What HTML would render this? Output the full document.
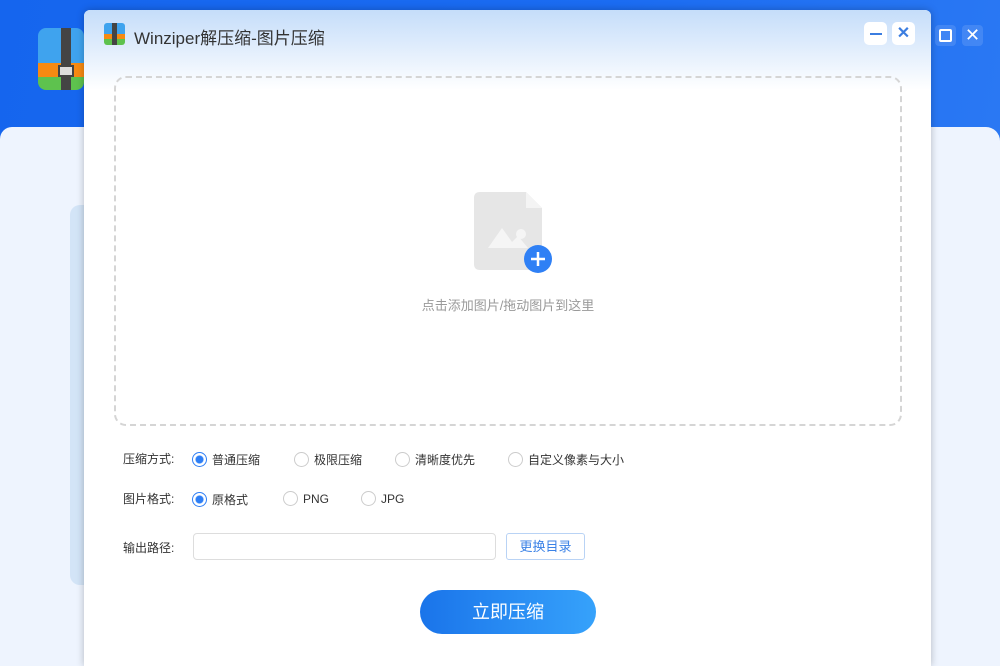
<!DOCTYPE html>
<html style="width:1000px;height:666px;overflow:hidden"><head><meta charset="utf-8"><style>
*{margin:0;padding:0;box-sizing:border-box}
body{width:1000px;height:666px;overflow:hidden;position:relative;background:#1a6cf0;font-family:"Liberation Sans","Noto Sans CJK SC",sans-serif}
.top{position:absolute;left:0;top:0;width:1000px;height:140px;background:linear-gradient(100deg,#1565ee,#1b6cf2 60%,#2a78f3)}
.panel{position:absolute;left:0;top:127px;width:1000px;height:539px;background:#eef4fe;border-radius:12px 14px 0 0}
.card{position:absolute;left:70px;top:205px;width:40px;height:380px;background:#d3e4f7;border-radius:10px}
.dlg{position:absolute;left:84px;top:10px;width:847px;height:656px;background:#fff;border-radius:6px 6px 0 0;box-shadow:0 0 8px rgba(0,0,0,.25);overflow:hidden}
.hdr{position:absolute;left:0;top:0;width:100%;height:80px;background:linear-gradient(#c5ddfa,#fff)}
.title{position:absolute;left:50px;top:14px;font-size:17px;color:#333}
.wb{position:absolute;top:12px;width:23px;height:23px;background:#fff;border-radius:5px}
.drop{position:absolute;left:30px;top:66px;width:788px;height:350px;border:2px dashed #d5d5d5;border-radius:12px}
.hint{position:absolute;left:0;width:100%;top:217px;text-align:center;font-size:13px;color:#999}
.lbl{position:absolute;left:39px;font-size:12px;color:#333}
.r{position:absolute;font-size:12px;color:#333;display:flex;align-items:center}
.r i{display:inline-block;width:15px;height:15px;border:1px solid #ccc;border-radius:50%;margin-right:5px;background:#fff}
.r i.on{border:1.5px solid #2d7ef5;background:radial-gradient(circle,#2d7ef5 3.5px,#fff 4.5px)}
.inp{position:absolute;left:109px;top:523px;width:303px;height:27px;border:1px solid #ddd;border-radius:4px}
.btn2{position:absolute;left:422px;top:523px;width:79px;height:27px;border:1px solid #b9d3f5;border-radius:3px;color:#3b82e6;font-size:13px;text-align:center;line-height:25px}
.go{position:absolute;left:336px;top:580px;width:176px;height:44px;border-radius:22px;background:linear-gradient(90deg,#1a74ea,#36a2fb);color:#fff;font-size:18px;text-align:center;line-height:44px}
</style></head><body>
<div class="top"></div>
<div class="panel"></div>
<div class="card"></div>
<div style="position:absolute;left:38px;top:28px;width:46px;height:62px;border-radius:8px;overflow:hidden">
<div style="height:35px;background:#3fa3ee"></div><div style="height:14px;background:#f78a12"></div><div style="height:13px;background:#5ec24e"></div>
<div style="position:absolute;left:23px;top:0;width:10px;height:62px;background:#444"></div>
<div style="position:absolute;left:20px;top:37px;width:16px;height:12px;background:#ddd;border:2px solid #444"></div></div>
<div style="position:absolute;left:935px;top:25px;width:21px;height:21px;background:rgba(255,255,255,.12);border-radius:4px"><div style="position:absolute;left:4px;top:4px;width:13px;height:13px;border:2px solid #fff;border-radius:2px"></div></div>
<div style="position:absolute;left:962px;top:25px;width:21px;height:21px;background:rgba(255,255,255,.12);border-radius:4px;color:#fff;font-size:18px;text-align:center;line-height:21px">✕</div>
<div class="dlg">
<div class="hdr"></div>
<div style="position:absolute;left:20px;top:13px;width:21px;height:22px;border-radius:3px;overflow:hidden"><div style="height:11px;background:#3fa3ee"></div><div style="height:5px;background:#f78a12"></div><div style="height:6px;background:#5ec24e"></div><div style="position:absolute;left:8px;top:0;width:5px;height:22px;background:#444"></div></div>
<div class="title">Winziper解压缩-图片压缩</div>
<div class="wb" style="left:780px"><div style="position:absolute;left:6px;top:11px;width:12px;height:2px;background:#3b7de0"></div></div>
<div class="wb" style="left:808px;color:#3b7de0;font-size:16px;text-align:center;line-height:23px;font-weight:bold">✕</div>
<div class="drop">
<svg style="position:absolute;left:358px;top:114px" width="80" height="84" viewBox="0 0 80 84">
<path d="M6 0H52L68 16V72Q68 78 62 78H6Q0 78 0 72V6Q0 0 6 0Z" fill="#e6e6e6"/><path d="M52 0V16H68Z" fill="#f4f4f4"/>
<circle cx="47" cy="42" r="5" fill="#f5f5f5"/><path d="M14 56L28 36L38 50L44 44L54 56Z" fill="#f5f5f5"/>
<circle cx="64" cy="67" r="14" fill="#2f80f5"/><path d="M64 60V74M57 67H71" stroke="#fff" stroke-width="2.5"/></svg>
<div class="hint">点击添加图片/拖动图片到这里</div></div>
<div class="lbl" style="top:440px">压缩方式:</div>
<div class="r" style="left:108px;top:441px"><i class="on"></i>普通压缩</div>
<div class="r" style="left:210px;top:441px"><i></i>极限压缩</div>
<div class="r" style="left:311px;top:441px"><i></i>清晰度优先</div>
<div class="r" style="left:424px;top:441px"><i></i>自定义像素与大小</div>
<div class="lbl" style="top:480px">图片格式:</div>
<div class="r" style="left:108px;top:481px"><i class="on"></i>原格式</div>
<div class="r" style="left:199px;top:481px"><i></i>PNG</div>
<div class="r" style="left:277px;top:481px"><i></i>JPG</div>
<div class="lbl" style="top:529px">输出路径:</div>
<div class="inp"></div><div class="btn2">更换目录</div>
<div class="go">立即压缩</div>
</div>
</body></html>
